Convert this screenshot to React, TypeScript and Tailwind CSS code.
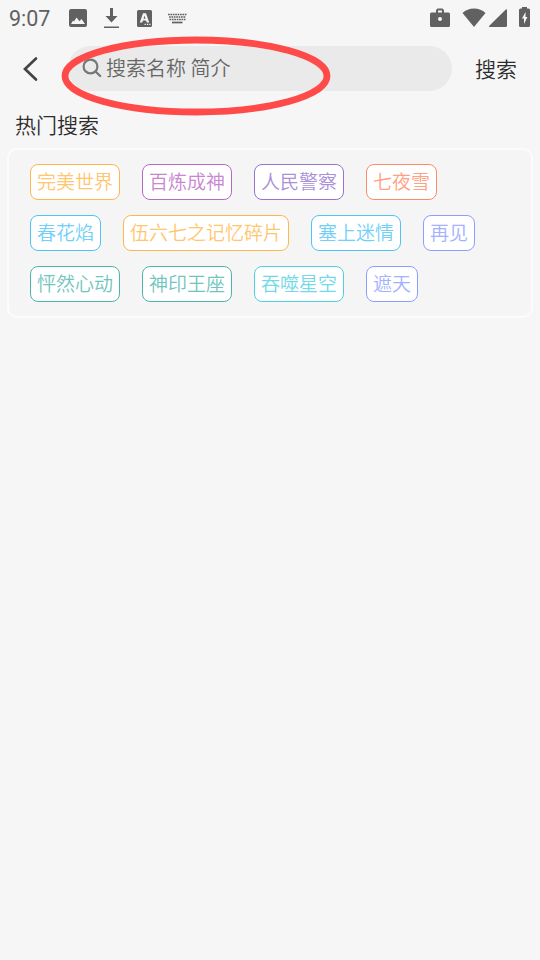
import React, { useState } from 'react';

interface HotWord {
  label: string;
  style: string;
}

const hotWords: HotWord[][] = [
  [
    { label: '完美世界', style: 'border-[#ffb74d] text-[#ffc670]' },
    { label: '百炼成神', style: 'border-[#ba68c8] text-[#c886d3]' },
    { label: '人民警察', style: 'border-[#9575cd] text-[#aa91d7]' },
    { label: '七夜雪', style: 'border-[#ff8a65] text-[#ffa184]' },
  ],
  [
    { label: '春花焰', style: 'border-[#4fc3f7] text-[#72cff8]' },
    { label: '伍六七之记忆碎片', style: 'border-[#ffb74d] text-[#ffc670]' },
    { label: '塞上迷情', style: 'border-[#4fc3f7] text-[#72cff8]' },
    { label: '再见', style: 'border-[#8c9eff] text-[#a3b1ff]' },
  ],
  [
    { label: '怦然心动', style: 'border-[#4db6ac] text-[#71c5bd]' },
    { label: '神印王座', style: 'border-[#4db6ac] text-[#71c5bd]' },
    { label: '吞噬星空', style: 'border-[#4dd0e1] text-[#71d9e7]' },
    { label: '遮天', style: 'border-[#8c9eff] text-[#a3b1ff]' },
  ],
];

const StatusBar: React.FC = () => (
  <div className="flex h-[37px] items-center justify-between pl-[9px] pr-[10px] text-[#616161]">
    <div className="flex items-center">
      <span className="w-[60px] font-['Roboto',sans-serif] text-[21.5px] font-normal leading-none">9:07</span>
      <svg className="-mt-px" width="18" height="18" viewBox="0 0 18 18" fill="currentColor">
        <path fillRule="evenodd" d="M2 0h14a2 2 0 0 1 2 2v14a2 2 0 0 1-2 2H2a2 2 0 0 1-2-2V2a2 2 0 0 1 2-2Zm0 15h14l-3.500-5-2 2.200-3-3.700-2.500 4-1-1Z" />
      </svg>
      <svg className="-mt-[2px] ml-[17px]" width="15" height="20" viewBox="0 0 15 20" fill="currentColor">
        <path d="M6 0h3v8h4.500L7.500 14.500 1.500 8H6ZM0 18.500h15v1.500H0Z" />
      </svg>
      <svg className="ml-[18px]" width="15" height="17" viewBox="0 0 15 17" fill="currentColor">
        <path fillRule="evenodd" d="M1.500 0h12A1.500 1.500 0 0 1 15 1.500v14a1.500 1.500 0 0 1-1.500 1.500h-12A1.500 1.500 0 0 1 0 15.500v-14A1.500 1.500 0 0 1 1.500 0ZM6 3.300 2.800 12.500h2.500l.6-2h3.200l.6 2h2.500L9 3.300ZM7.500 5.600l1 3.200h-2ZM7.500 13.800h1.300v1.300H7.500Zm2.400 0h1.300v1.300H9.900Zm2.300 0h1.300v1.300h-1.300Z" />
      </svg>
      <svg className="ml-4" width="19" height="11" viewBox="0 0 19 11" fill="none" stroke="currentColor">
        <path d="M0 1.500h19M1 4h17M1.500 6.500h16" strokeWidth="1.700" strokeDasharray="1.700 .7" />
        <path d="M4 9.500h10.500" strokeWidth="1.700" />
      </svg>
    </div>
    <div className="flex items-center">
      <svg className="-mt-px" width="20" height="20" viewBox="0 0 20 20" fill="currentColor">
        <path fillRule="evenodd" d="M6 4.500V2L7.500.5h5L14 2v2.500h4.500A1.500 1.500 0 0 1 20 6v11.500a1.500 1.500 0 0 1-1.500 1.500h-17A1.500 1.500 0 0 1 0 17.500V6a1.500 1.500 0 0 1 1.500-1.500Zm2 0h4v-2H8ZM10 9a2 2 0 1 0 0 4 2 2 0 0 0 0-4Z" />
      </svg>
      <svg className="-mt-[3px] ml-3" width="24" height="19" viewBox="0 0 24 19" fill="currentColor">
        <path d="M12 19 .5 5C3.500 2 7.500.5 12 .5S20.500 2 23.500 5Z" />
      </svg>
      <svg className="-mt-px ml-[3px]" width="18" height="18" viewBox="0 0 18 18" fill="currentColor">
        <path d="M18 1.200v15.600a1.200 1.200 0 0 1-1.200 1.200H.8c-.8 0-1-.7-.5-1.200L16.800.5c.6-.5 1.200-.1 1.200.7Z" />
      </svg>
      <svg className="-mt-[3px] ml-3" width="11" height="20" viewBox="0 0 11 20" fill="currentColor">
        <path fillRule="evenodd" d="M3 1.500V0h5v1.500h1.500A1.500 1.500 0 0 1 11 3v15.500a1.500 1.500 0 0 1-1.500 1.500h-8A1.500 1.500 0 0 1 0 18.500V3a1.500 1.500 0 0 1 1.500-1.500ZM6.500 5 3 11.500h2v5.500l3.400-7H6.500Z" />
      </svg>
    </div>
  </div>
);

const App: React.FC = () => {
  const [keyword, setKeyword] = useState('');

  return (
    <div className="relative h-[960px] w-[540px] overflow-hidden bg-[#f6f6f6] font-['Noto_Sans_CJK_SC',sans-serif] font-[350]">
      <StatusBar />

      <header className="flex h-[63px] items-center">
        <button className="ml-[22px] w-[46px]" aria-label="返回">
          <svg width="17" height="26" viewBox="0 0 17 26" fill="none" stroke="#444" strokeWidth="2.700" strokeLinecap="round" strokeLinejoin="miter">
            <path d="M14 2.500 3 13l11 10.500" />
          </svg>
        </button>
        <label className="flex h-[45px] w-[384px] items-center rounded-full bg-[#eaeaea] pl-[14px]">
          <svg className="-mt-[2px]" width="20" height="20" viewBox="0 0 20 20" fill="none" stroke="#777" strokeWidth="2.200" strokeLinecap="round">
            <circle cx="8.500" cy="8.500" r="6.900" />
            <path d="m13.600 13.600 4.600 4.400" />
          </svg>
          <input
            className="-mt-[2px] ml-1 w-[320px] bg-transparent text-[20px] text-[#444] outline-none placeholder:text-[#666]"
            value={keyword}
            onChange={e => setKeyword(e.target.value)}
            placeholder="搜索名称 简介"
          />
        </label>
        <button className="ml-[23px] mt-px text-[21px] text-[#2c2c2c]">搜索</button>
      </header>

      <h2 className="h-12 pl-[15px] text-[21px] leading-[48px] text-[#2c2c2c]">热门搜索</h2>

      <section className="mx-[7px] flex h-[170px] flex-col gap-[15px] rounded-[10px] border-2 border-[#fcfcfc] bg-[#f5f5f5] pl-[21px] pt-[14px]">
        {hotWords.map((row, i) => (
          <div key={i} className="flex gap-[22px]">
            {row.map(word => (
              <button
                key={word.label}
                className={`h-9 rounded-[8px] border bg-white px-1.5 pb-[2px] text-[19px] leading-[32px] whitespace-nowrap ${word.style}`}
              >
                {word.label}
              </button>
            ))}
          </div>
        ))}
      </section>

      {/* red marker around the search field */}
      <svg className="pointer-events-none absolute left-[60px] top-[34px]" width="274" height="84" viewBox="0 0 274 84" fill="none">
        <ellipse cx="136" cy="42" rx="131" ry="36" stroke="#ff4a4a" strokeWidth="6.800" />
      </svg>
    </div>
  );
};

export default App;
